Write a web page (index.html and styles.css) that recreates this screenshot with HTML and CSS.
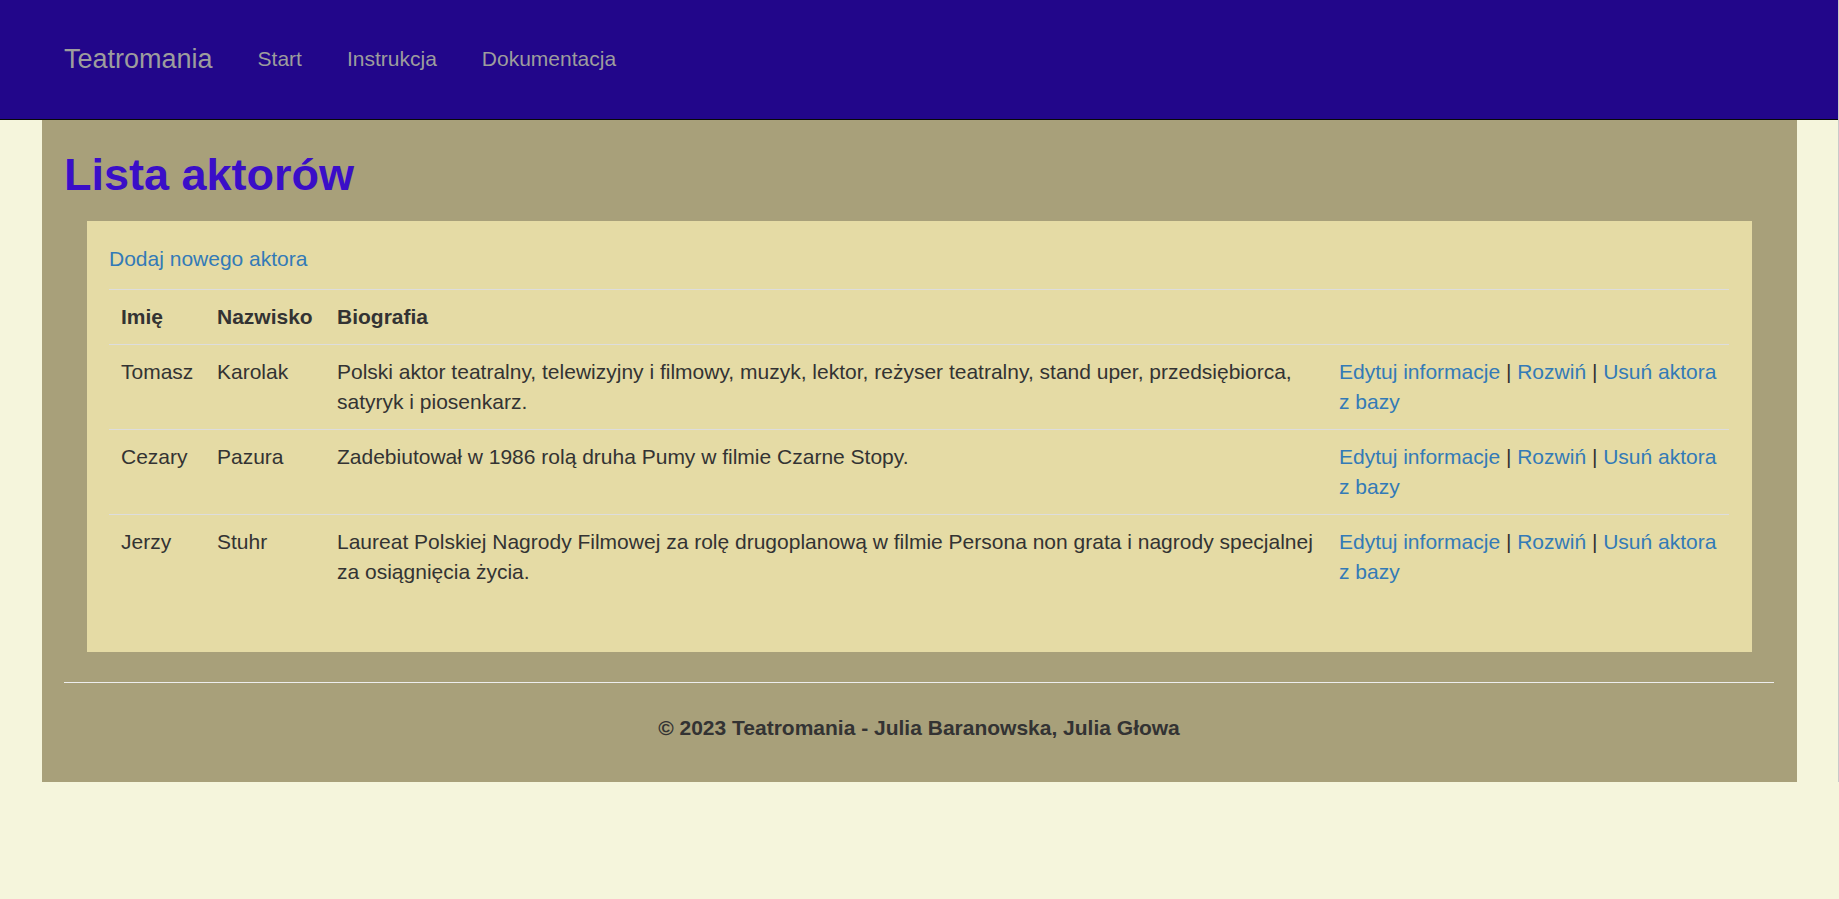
FILE: index.html
```html
<!DOCTYPE html>
<html lang="pl">
<head>
<meta charset="utf-8">
<title>Lista aktorów - Teatromania</title>
<link rel="stylesheet" href="styles.css">
</head>
<body>
<nav class="navbar">
  <div class="nav-inner">
    <a class="brand" href="#">Teatromania</a>
    <ul class="nav-links">
      <li><a href="#">Start</a></li>
      <li><a href="#">Instrukcja</a></li>
      <li><a href="#">Dokumentacja</a></li>
    </ul>
  </div>
</nav>
<main class="container">
  <h2 class="page-title">Lista aktorów</h2>
  <section class="panel">
    <p class="add-link"><a href="#">Dodaj nowego aktora</a></p>
    <table class="actors">
      <colgroup>
        <col class="col-first">
        <col class="col-last">
        <col class="col-bio">
        <col class="col-actions">
      </colgroup>
      <thead>
        <tr>
          <th>Imię</th>
          <th>Nazwisko</th>
          <th class="bio">Biografia</th>
          <th class="actions"></th>
        </tr>
      </thead>
      <tbody>
        <tr>
          <td>Tomasz</td>
          <td>Karolak</td>
          <td class="bio">Polski aktor teatralny, telewizyjny i filmowy, muzyk, lektor, reżyser teatralny, stand uper, przedsiębiorca, satyryk i piosenkarz.</td>
          <td class="actions"><a href="#">Edytuj informacje</a><span class="sep"> | </span><a href="#">Rozwiń</a><span class="sep"> | </span><a href="#">Usuń aktora z bazy</a></td>
        </tr>
        <tr>
          <td>Cezary</td>
          <td>Pazura</td>
          <td class="bio">Zadebiutował w 1986 rolą druha Pumy w filmie Czarne Stopy.</td>
          <td class="actions"><a href="#">Edytuj informacje</a><span class="sep"> | </span><a href="#">Rozwiń</a><span class="sep"> | </span><a href="#">Usuń aktora z bazy</a></td>
        </tr>
        <tr>
          <td>Jerzy</td>
          <td>Stuhr</td>
          <td class="bio">Laureat Polskiej Nagrody Filmowej za rolę drugoplanową w filmie Persona non grata i nagrody specjalnej za osiągnięcia życia.</td>
          <td class="actions"><a href="#">Edytuj informacje</a><span class="sep"> | </span><a href="#">Rozwiń</a><span class="sep"> | </span><a href="#">Usuń aktora z bazy</a></td>
        </tr>
      </tbody>
    </table>
  </section>
  <hr class="footer-rule">
  <footer class="footer">
    <p>© 2023 Teatromania - Julia Baranowska, Julia Głowa</p>
  </footer>
</main>
</body>
</html>
```
FILE: styles.css
```css
html {
  border-right: 1px solid #c9c9c9;
  background: #f5f5dc;
}

body {
  margin: 0;
  background: #f5f5dc;
  font-family: "Liberation Sans", Arial, sans-serif;
  font-size: 21px;
  line-height: 30px;
  color: #333333;
}

a {
  color: #337ab7;
  text-decoration: none;
}

.navbar {
  height: 119px;
  box-sizing: content-box;
  background: #22068a;
  border-bottom: 1px solid #080808;
  display: flex;
  align-items: center;
  padding-bottom: 0;
}

.nav-inner {
  width: 1755px;
  margin: 0 auto;
  padding: 0 22.5px 2px;
  box-sizing: border-box;
  display: flex;
  align-items: center;
}

.brand {
  font-size: 27px;
  line-height: 30px;
  color: #9d9d9d;
  margin-right: 22.5px;
}

.nav-links {
  list-style: none;
  margin: 0;
  padding: 0;
  display: flex;
}

.nav-links a {
  display: block;
  padding: 0 22.5px;
  color: #9d9d9d;
  line-height: 30px;
}

.container {
  width: 1755px;
  margin: 0 auto;
  padding: 29.5px 22.5px 39px;
  box-sizing: border-box;
  background: #a8a07a;
}

.page-title {
  margin: 0 0 22px;
  font-size: 45px;
  line-height: 49.5px;
  font-weight: bold;
  color: #3a0ec8;
}

.panel {
  margin: 0 22.5px;
  padding: 22.5px;
  background: #e5dba5;
}

.add-link {
  margin: 0 0 15.5px;
}

.actors {
  width: 100%;
  table-layout: fixed;
  border-collapse: collapse;
  margin-bottom: 30px;
}

.col-first { width: 96px; }
.col-last { width: 120px; }
.col-bio { width: 1002px; }
.col-actions { width: 402px; }

.actors th,
.actors td {
  padding: 12px;
  border-top: 1px solid #dddddd;
  text-align: left;
  vertical-align: top;
}

.actors th {
  font-weight: bold;
}

.actors .bio {
  padding-right: 4px;
}

.actors .actions {
  padding-right: 2px;
}

.sep {
  color: #333333;
}

.footer-rule {
  margin: 30.5px 0 29.5px;
  border: 0;
  border-top: 1px solid #eeeeee;
  height: 0;
}

.footer p {
  margin: 0;
  text-align: center;
  font-weight: bold;
}
```
